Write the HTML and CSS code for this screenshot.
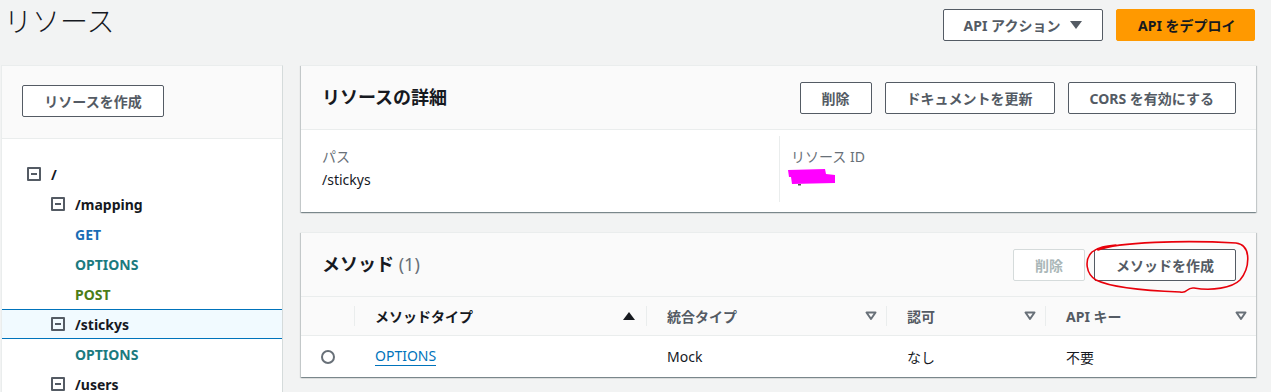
FILE: index.html
```html
<!DOCTYPE html>
<html lang="ja">
<head>
    <meta charset="UTF-8">
    <meta name="viewport" content="width=device-width, initial-scale=1.0">
    <title>リソース</title>
    <link rel="stylesheet" href="styles.css">
</head>
<body>
    <header class="page-header">
        <h1>リソース</h1>
        <div class="header-actions">
            <button class="btn btn-actions">API アクション <span class="caret"></span></button>
            <button class="btn btn-primary">API をデプロイ</button>
        </div>
    </header>

    <div class="layout">
        <aside class="sidebar">
            <div class="sidebar-top">
                <button class="btn btn-create">リソースを作成</button>
            </div>
            <ul class="tree">
                <li class="tree-row level-0"><span class="toggle"></span><span class="res">/</span></li>
                <li class="tree-row level-1"><span class="toggle"></span><span class="res">/mapping</span></li>
                <li class="tree-row level-2"><span class="method get">GET</span></li>
                <li class="tree-row level-2"><span class="method options">OPTIONS</span></li>
                <li class="tree-row level-2"><span class="method post">POST</span></li>
                <li class="tree-row level-1 selected"><span class="toggle"></span><span class="res">/stickys</span></li>
                <li class="tree-row level-2"><span class="method options">OPTIONS</span></li>
                <li class="tree-row level-1"><span class="toggle"></span><span class="res">/users</span></li>
            </ul>
        </aside>

        <main class="content">
            <section class="card">
                <div class="card-header">
                    <h2>リソースの詳細</h2>
                    <div class="card-actions">
                        <button class="btn">削除</button>
                        <button class="btn">ドキュメントを更新</button>
                        <button class="btn">CORS を有効にする</button>
                    </div>
                </div>
                <div class="details">
                    <div class="detail">
                        <div class="detail-label">パス</div>
                        <div class="detail-value">/stickys</div>
                    </div>
                    <div class="detail">
                        <div class="detail-label">リソース ID</div>
                        <div class="detail-value">
                            <svg class="redacted" width="50" height="18" viewBox="0 0 50 18">
                                <path d="M0 2 L37 1 L38 6 L47 7 L47 15 L4 16 L3 9 L1 9 Z" fill="#ff00ff"/>
                                <rect x="10" y="16" width="3" height="1.5" fill="#555"/>
                            </svg>
                        </div>
                    </div>
                </div>
            </section>

            <section class="card">
                <div class="card-header">
                    <h2>メソッド <span class="count">(1)</span></h2>
                    <div class="card-actions tight">
                        <button class="btn" disabled>削除</button>
                        <button class="btn">メソッドを作成</button>
                    </div>
                    <svg class="scribble" width="170" height="60" viewBox="0 0 170 60">
                        <path d="M14 12 C34 4, 100 2, 152 5 C168 7, 166 30, 156 42 C148 50, 128 53, 110 50 C102 49, 104 56, 96 54 C70 53, 30 51, 12 42 C2 36, 0 22, 8 14 C14 9, 22 8, 32 7" fill="none" stroke="#e8000b" stroke-width="1.6" stroke-linecap="round"/>
                    </svg>
                </div>
                <div class="table">
                    <div class="th th-select"></div>
                    <div class="th sorted">メソッドタイプ <span class="sort-up"></span></div>
                    <div class="th">統合タイプ
                        <svg class="sort-icon" width="12" height="10" viewBox="0 0 12 10"><path d="M1.5 1.5h9L6 8z" fill="none" stroke="#687078" stroke-width="2" stroke-linejoin="round"/></svg>
                    </div>
                    <div class="th">認可
                        <svg class="sort-icon" width="12" height="10" viewBox="0 0 12 10"><path d="M1.5 1.5h9L6 8z" fill="none" stroke="#687078" stroke-width="2" stroke-linejoin="round"/></svg>
                    </div>
                    <div class="th">API キー
                        <svg class="sort-icon" width="12" height="10" viewBox="0 0 12 10"><path d="M1.5 1.5h9L6 8z" fill="none" stroke="#687078" stroke-width="2" stroke-linejoin="round"/></svg>
                    </div>

                    <div class="td td-select"><span class="radio"></span></div>
                    <div class="td"><a class="link" href="#">OPTIONS</a></div>
                    <div class="td">Mock</div>
                    <div class="td">なし</div>
                    <div class="td">不要</div>
                </div>
            </section>
        </main>
    </div>
</body>
</html>
```

FILE: styles.css
```css
:root {
    --primary-font: "Noto Sans", "Noto Sans CJK JP", sans-serif;
    --bg-color: #f2f3f3;
    --text-color: #16191f;
    --secondary-color: #545b64;
    --border-color: #eaeded;
    --link-color: #0073bb;
}

* {
    margin: 0;
    padding: 0;
    box-sizing: border-box;
}

body {
    font-family: var(--primary-font);
    font-size: 14px;
    color: var(--text-color);
    background-color: var(--bg-color);
    overflow: hidden;
}

.btn {
    font-family: var(--primary-font);
    font-size: 14px;
    font-weight: bold;
    height: 32px;
    padding: 0 21px;
    color: var(--secondary-color);
    background-color: white;
    border: 1px solid var(--secondary-color);
    border-radius: 2px;
    white-space: nowrap;
}

.btn:disabled {
    color: #aab7b8;
    border-color: #d5dbdb;
}

/* header */
.page-header {
    display: flex;
    justify-content: space-between;
    height: 65px;
    padding: 0 16px 0 4px;
}

.page-header h1 {
    font-size: 28px;
    font-weight: 300;
    line-height: 42px;
}

.header-actions {
    display: flex;
    gap: 13px;
    margin-top: 9px;
}

.btn-actions {
    width: 160px;
    display: flex;
    align-items: center;
    justify-content: center;
    gap: 10px;
}

.caret {
    width: 0;
    height: 0;
    border-left: 6px solid transparent;
    border-right: 6px solid transparent;
    border-top: 8px solid var(--secondary-color);
}

.btn-primary {
    width: 139px;
    color: var(--text-color);
    background-color: #ff9900;
    border-color: #ff9900;
}

/* layout */
.layout {
    display: flex;
    gap: 18px;
    padding: 0 15px 0 1px;
}

.sidebar {
    width: 282px;
    flex: none;
    min-height: 340px;
    background-color: white;
    border: 1px solid var(--border-color);
    border-right-color: #d5dbdb;
}

.sidebar-top {
    padding: 19px 19px 21px 20px;
    background-color: #fafafa;
    border-bottom: 1px solid var(--border-color);
}

.btn-create {
    width: 142px;
    padding: 0;
}

.tree {
    list-style: none;
    padding-top: 20px;
}

.tree-row {
    display: flex;
    align-items: center;
    gap: 10px;
    height: 30px;
    font-weight: bold;
    border-top: 1px solid transparent;
    border-bottom: 1px solid transparent;
}

.tree-row.level-0 { padding-left: 25px; }
.tree-row.level-1 { padding-left: 49px; }
.tree-row.level-2 { padding-left: 73px; }

.tree-row.selected {
    background-color: #f1faff;
    border-color: var(--link-color);
}

.toggle {
    width: 14px;
    height: 14px;
    border: 2px solid var(--secondary-color);
    border-radius: 1px;
    display: flex;
    align-items: center;
    justify-content: center;
}

.toggle::after {
    content: "";
    width: 6px;
    height: 2px;
    background-color: var(--secondary-color);
}

.method.get { color: #1a6db5; }
.method.options { color: #1b7a7f; }
.method.post { color: #4b7d18; }

/* cards */
.content {
    flex: 1;
    display: flex;
    flex-direction: column;
    gap: 20px;
}

.card {
    background-color: white;
    box-shadow: 0 1px 1px 0 rgba(0, 28, 36, 0.3), 1px 1px 1px 0 rgba(0, 28, 36, 0.15), -1px 1px 1px 0 rgba(0, 28, 36, 0.15);
    border-top: 1px solid var(--border-color);
}

.card-header {
    position: relative;
    display: flex;
    align-items: center;
    justify-content: space-between;
    height: 64px;
    padding: 0 20px 0 21px;
    background-color: #fafafa;
    border-bottom: 1px solid var(--border-color);
}

.card-header h2 {
    font-size: 18px;
    font-weight: bold;
    margin-bottom: 4px;
}

.card-header .count {
    font-weight: normal;
    color: #687078;
}

.card-actions {
    display: flex;
    gap: 13px;
}

.card-actions.tight {
    gap: 9px;
}

.scribble {
    position: absolute;
    left: 783px;
    top: 5px;
}

.details {
    display: grid;
    grid-template-columns: 1fr 1fr;
    padding: 6px 20px 10px 21px;
}

.detail {
    padding: 10px 0;
}

.detail + .detail {
    border-left: 1px solid var(--border-color);
    padding-left: 11px;
}

.detail-label {
    color: #687078;
    line-height: 22px;
}

.detail-value {
    line-height: 24px;
    height: 24px;
}

.redacted {
    display: block;
    margin-left: -3px;
}

/* table */
.table {
    display: grid;
    grid-template-columns: 53px 292px 240px 159px 1fr;
}

.th {
    display: flex;
    align-items: center;
    height: 39px;
    padding-right: 9px;
    background-color: #fafafa;
    border-bottom: 1px solid var(--border-color);
    font-weight: bold;
    color: var(--secondary-color);
}

.th::before {
    content: "";
    width: 1px;
    height: 20px;
    margin-right: 20px;
    background-color: var(--border-color);
}

.th-select::before {
    display: none;
}

.th.sorted {
    color: var(--text-color);
}

.sort-up,
.sort-icon {
    margin-left: auto;
}

.sort-up {
    width: 0;
    height: 0;
    border-left: 6px solid transparent;
    border-right: 6px solid transparent;
    border-bottom: 8px solid var(--text-color);
    margin-right: 2px;
}

.td {
    display: flex;
    align-items: center;
    height: 41px;
    padding-left: 21px;
}

.td-select {
    padding-left: 20px;
}

.radio {
    width: 14px;
    height: 14px;
    border: 2px solid #687078;
    border-radius: 50%;
}

.link {
    color: var(--link-color);
    text-decoration: none;
    border-bottom: 1px solid var(--link-color);
    line-height: 18px;
}
```
